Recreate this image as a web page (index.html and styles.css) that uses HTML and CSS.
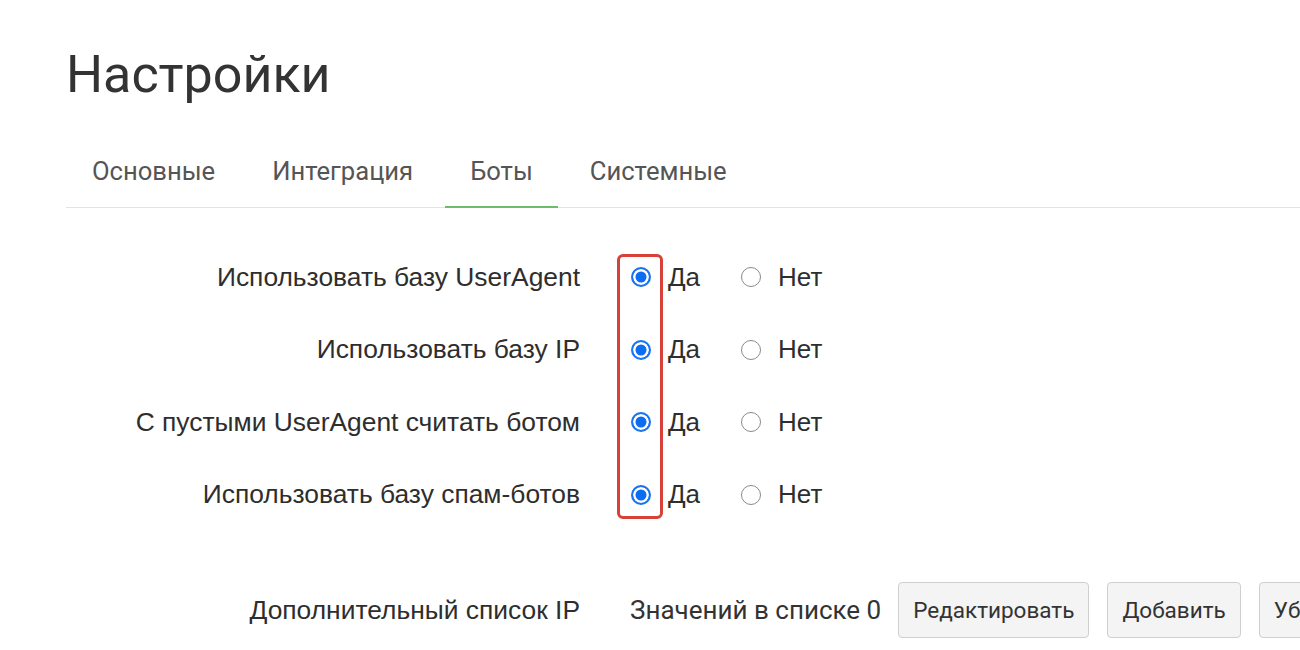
FILE: index.html
```html
<!DOCTYPE html>
<html lang="ru">
<head>
<meta charset="utf-8">
<title>Настройки</title>
<link rel="stylesheet" href="styles.css">
</head>
<body>
<div class="page">
  <h1 class="title">Настройки</h1>
  <ul class="tabs">
    <li class="tab">Основные</li>
    <li class="tab">Интеграция</li>
    <li class="tab active">Боты</li>
    <li class="tab">Системные</li>
  </ul>
  <form class="form">
    <div class="rows">
      <div class="row">
        <div class="label">Использовать базу UserAgent</div>
        <div class="control">
          <label class="opt"><input type="radio" name="r1" checked><span>Да</span></label>
          <label class="opt"><input type="radio" name="r1"><span>Нет</span></label>
        </div>
      </div>
      <div class="row">
        <div class="label">Использовать базу IP</div>
        <div class="control">
          <label class="opt"><input type="radio" name="r2" checked><span>Да</span></label>
          <label class="opt"><input type="radio" name="r2"><span>Нет</span></label>
        </div>
      </div>
      <div class="row">
        <div class="label">С пустыми UserAgent считать ботом</div>
        <div class="control">
          <label class="opt"><input type="radio" name="r3" checked><span>Да</span></label>
          <label class="opt"><input type="radio" name="r3"><span>Нет</span></label>
        </div>
      </div>
      <div class="row">
        <div class="label">Использовать базу спам-ботов</div>
        <div class="control">
          <label class="opt"><input type="radio" name="r4" checked><span>Да</span></label>
          <label class="opt"><input type="radio" name="r4"><span>Нет</span></label>
        </div>
      </div>
      <div class="highlight"></div>
    </div>
    <div class="row list-row">
      <div class="label">Дополнительный список IP</div>
      <div class="control list-control">
        <span class="count">Значений в списке 0</span>
        <button type="button" class="btn">Редактировать</button>
        <button type="button" class="btn">Добавить</button>
        <button type="button" class="btn">Убрать</button>
      </div>
    </div>
  </form>
</div>
</body>
</html>
```
FILE: styles.css
```css
html, body {
  margin: 0;
  padding: 0;
  background: #fff;
  overflow: hidden;
}
.page {
  padding: 48px 0 0 66px;
  color: #333;
}
.title {
  margin: 0;
  font-family: Roboto, sans-serif;
  font-weight: 400;
  font-size: 52px;
  line-height: 54px;
  color: #333;
}
.tabs {
  list-style: none;
  margin: 32px 0 0 0;
  padding: 0;
  display: flex;
  gap: 7px;
  border-bottom: 1px solid #e3e3e3;
  white-space: nowrap;
}
.tab {
  font-family: Roboto, sans-serif;
  font-size: 25.6px;
  color: #555;
  padding: 0 25px 0 25px;
  height: 74px;
  line-height: 74px;
  border-bottom: 2px solid transparent;
  margin-bottom: -1px;
  box-sizing: border-box;
}
.tab:first-child {
  padding-left: 26px;
}
.tab.active {
  border-bottom-color: #6dbb6d;
  color: #555;
}
.form {
  margin-top: 33px;
}
.rows {
  position: relative;
}
.row {
  display: flex;
  align-items: center;
  height: 72.5px;
}
.label {
  width: 514px;
  text-align: right;
  font-family: "Liberation Sans", Arial, sans-serif;
  font-size: 26.4px;
  color: #2e2e2e;
  flex: none;
  white-space: nowrap;
}
.control {
  margin-left: 50px;
  display: flex;
  align-items: center;
  gap: 40px;
}
.opt {
  display: flex;
  align-items: center;
  gap: 17px;
  font-family: "Liberation Sans", Arial, sans-serif;
  font-size: 26px;
  color: #2e2e2e;
}
.opt input {
  appearance: none;
  -webkit-appearance: none;
  margin: 0 0 0 1px;
  width: 20px;
  height: 20px;
  border-radius: 50%;
  border: 1.5px solid #8a8a8a;
  background: #fff;
  box-sizing: border-box;
}
.opt input:checked {
  border: 2px solid #1a74ee;
  background: #0c6df3;
  box-shadow: inset 0 0 0 2.5px #fff;
}
.highlight {
  position: absolute;
  left: 551px;
  top: 13px;
  width: 46px;
  height: 265px;
  border: 3px solid #d8403a;
  border-radius: 6px;
  box-sizing: border-box;
}
.list-row {
  margin-top: 43px;
  height: 72px;
}
.list-control {
  gap: 18px;
  white-space: nowrap;
}
.count {
  font-family: Roboto, sans-serif;
  font-size: 26px;
  color: #333;
  margin-right: -1px;
}
.btn {
  font-family: Roboto, sans-serif;
  font-size: 22.5px;
  color: #333;
  background: #f4f4f4;
  border: 1px solid #cfcfcf;
  border-radius: 4px;
  height: 56px;
  padding: 0 14px;
  flex: none;
}
```
